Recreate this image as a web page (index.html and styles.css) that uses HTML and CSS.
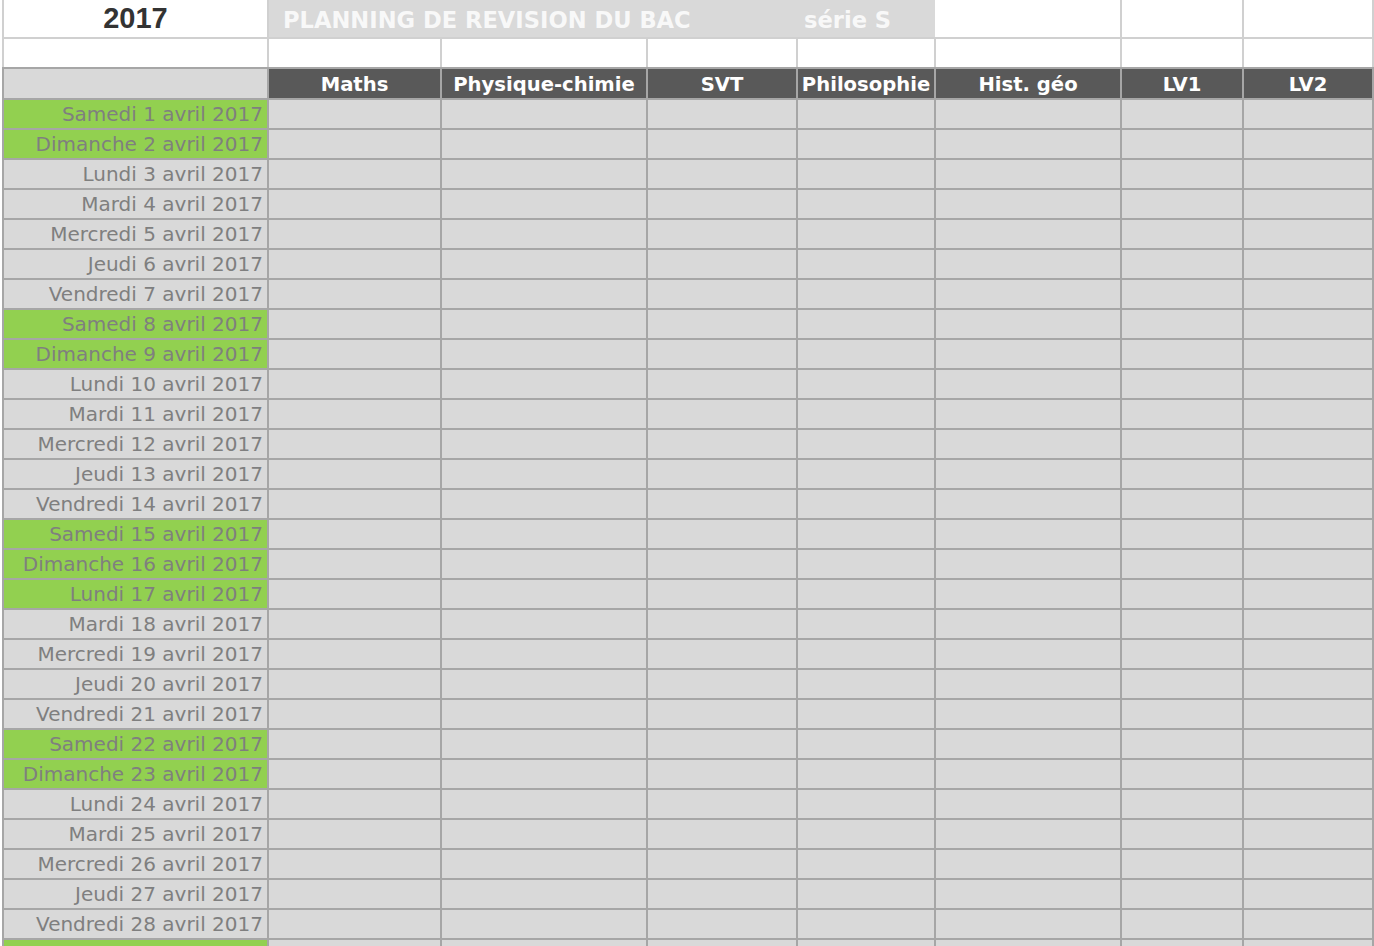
FILE: index.html
```html
<!DOCTYPE html>
<html lang="fr">
<head>
    <meta charset="UTF-8">
    <meta name="viewport" content="width=device-width, initial-scale=1.0">
    <title>Planning de révision du bac</title>
    <link rel="stylesheet" href="styles.css">
</head>
<body>
    <table class="sheet">
        <colgroup>
            <col class="c-date">
            <col class="c-maths">
            <col class="c-phys">
            <col class="c-svt">
            <col class="c-philo">
            <col class="c-hist">
            <col class="c-lv1">
            <col class="c-lv2">
        </colgroup>
        <tr class="row-title">
            <td class="year">2017</td>
            <td class="title" colspan="3">PLANNING DE REVISION DU BAC</td>
            <td class="title serie">série S</td>
            <td class="after-title"></td>
            <td></td>
            <td></td>
        </tr>
        <tr class="row-blank">
            <td></td><td></td><td></td><td></td><td></td><td></td><td></td><td></td>
        </tr>
        <tr class="row-head">
            <td class="corner"></td>
            <td>Maths</td>
            <td>Physique-chimie</td>
            <td>SVT</td>
            <td>Philosophie</td>
            <td>Hist. géo</td>
            <td>LV1</td>
            <td>LV2</td>
        </tr>
        <tr><td class="day off">Samedi 1 avril 2017</td><td></td><td></td><td></td><td></td><td></td><td></td><td></td></tr>
        <tr><td class="day off">Dimanche 2 avril 2017</td><td></td><td></td><td></td><td></td><td></td><td></td><td></td></tr>
        <tr><td class="day">Lundi 3 avril 2017</td><td></td><td></td><td></td><td></td><td></td><td></td><td></td></tr>
        <tr><td class="day">Mardi 4 avril 2017</td><td></td><td></td><td></td><td></td><td></td><td></td><td></td></tr>
        <tr><td class="day">Mercredi 5 avril 2017</td><td></td><td></td><td></td><td></td><td></td><td></td><td></td></tr>
        <tr><td class="day">Jeudi 6 avril 2017</td><td></td><td></td><td></td><td></td><td></td><td></td><td></td></tr>
        <tr><td class="day">Vendredi 7 avril 2017</td><td></td><td></td><td></td><td></td><td></td><td></td><td></td></tr>
        <tr><td class="day off">Samedi 8 avril 2017</td><td></td><td></td><td></td><td></td><td></td><td></td><td></td></tr>
        <tr><td class="day off">Dimanche 9 avril 2017</td><td></td><td></td><td></td><td></td><td></td><td></td><td></td></tr>
        <tr><td class="day">Lundi 10 avril 2017</td><td></td><td></td><td></td><td></td><td></td><td></td><td></td></tr>
        <tr><td class="day selected">Mardi 11 avril 2017</td><td></td><td></td><td></td><td></td><td></td><td></td><td></td></tr>
        <tr><td class="day">Mercredi 12 avril 2017</td><td></td><td></td><td></td><td></td><td></td><td></td><td></td></tr>
        <tr><td class="day">Jeudi 13 avril 2017</td><td></td><td></td><td></td><td></td><td></td><td></td><td></td></tr>
        <tr><td class="day">Vendredi 14 avril 2017</td><td></td><td></td><td></td><td></td><td></td><td></td><td></td></tr>
        <tr><td class="day off">Samedi 15 avril 2017</td><td></td><td></td><td></td><td></td><td></td><td></td><td></td></tr>
        <tr><td class="day off">Dimanche 16 avril 2017</td><td></td><td></td><td></td><td></td><td></td><td></td><td></td></tr>
        <tr><td class="day off">Lundi 17 avril 2017</td><td></td><td></td><td></td><td></td><td></td><td></td><td></td></tr>
        <tr><td class="day">Mardi 18 avril 2017</td><td></td><td></td><td></td><td></td><td></td><td></td><td></td></tr>
        <tr><td class="day">Mercredi 19 avril 2017</td><td></td><td></td><td></td><td></td><td></td><td></td><td></td></tr>
        <tr><td class="day">Jeudi 20 avril 2017</td><td></td><td></td><td></td><td></td><td></td><td></td><td></td></tr>
        <tr><td class="day">Vendredi 21 avril 2017</td><td></td><td></td><td></td><td></td><td></td><td></td><td></td></tr>
        <tr><td class="day off">Samedi 22 avril 2017</td><td></td><td></td><td></td><td></td><td></td><td></td><td></td></tr>
        <tr><td class="day off">Dimanche 23 avril 2017</td><td></td><td></td><td></td><td></td><td></td><td></td><td></td></tr>
        <tr><td class="day">Lundi 24 avril 2017</td><td></td><td></td><td></td><td></td><td></td><td></td><td></td></tr>
        <tr><td class="day">Mardi 25 avril 2017</td><td></td><td></td><td></td><td></td><td></td><td></td><td></td></tr>
        <tr><td class="day">Mercredi 26 avril 2017</td><td></td><td></td><td></td><td></td><td></td><td></td><td></td></tr>
        <tr><td class="day">Jeudi 27 avril 2017</td><td></td><td></td><td></td><td></td><td></td><td></td><td></td></tr>
        <tr><td class="day">Vendredi 28 avril 2017</td><td></td><td></td><td></td><td></td><td></td><td></td><td></td></tr>
        <tr><td class="day off">Samedi 29 avril 2017</td><td></td><td></td><td></td><td></td><td></td><td></td><td></td></tr>
    </table>
</body>
</html>
```

FILE: styles.css
```css
html, body {
    margin: 0;
    padding: 0;
    background: #ffffff;
    overflow: hidden;
}
.sheet {
    margin-left: 2px;
    width: 1372px;
    table-layout: fixed;
    border-collapse: collapse;
    font-family: "DejaVu Sans", Verdana, sans-serif;
}
.c-date { width: 265px; }
.c-maths { width: 173px; }
.c-phys { width: 206px; }
.c-svt { width: 150px; }
.c-philo { width: 138px; }
.c-hist { width: 186px; }
.c-lv1 { width: 122px; }
.c-lv2 { width: 130px; }

.sheet td {
    height: 28px;
    padding: 0 4px;
    border: 2px solid #a6a6a6;
    background: #d9d9d9;
    white-space: nowrap;
    overflow: hidden;
}

/* title rows */
.row-title td,
.row-blank td {
    background: #ffffff;
    border-color: #d0d0d0;
}
.row-title td {
    height: 34px;
    border-top: none;
}
.row-blank td {
    border-bottom-color: #a6a6a6;
}
.year {
    text-align: center;
    font-family: "Liberation Sans", Arial, sans-serif;
    font-size: 29px;
    font-weight: bold;
    color: #333333;
}
.row-title .title {
    background: #d9d9d9;
    border-left: none;
    border-right: none;
    color: #f8f8f8;
    font-size: 22.6px;
    font-weight: bold;
    padding: 3px 0 0 14px;
}
.row-title .serie {
    padding-left: 7px;
}
.row-title .after-title {
    border-left: none;
}

/* subject headers */
.row-head td {
    background: #595959;
    color: #ffffff;
    font-size: 19.6px;
    font-weight: bold;
    text-align: center;
    padding: 1px 0 0 0;
}
.row-head .corner {
    background: #d9d9d9;
}

/* day column */
.day {
    text-align: right;
    color: #7f7f7f;
    font-size: 20px;
    padding-top: 2px;
}
.day.off {
    background: #92d050;
}
.day.selected {
    position: relative;
}
.day.selected::before {
    content: "";
    position: absolute;
    left: -4px;
    top: 0;
    bottom: 0;
    width: 2px;
    background: #217346;
}
```
